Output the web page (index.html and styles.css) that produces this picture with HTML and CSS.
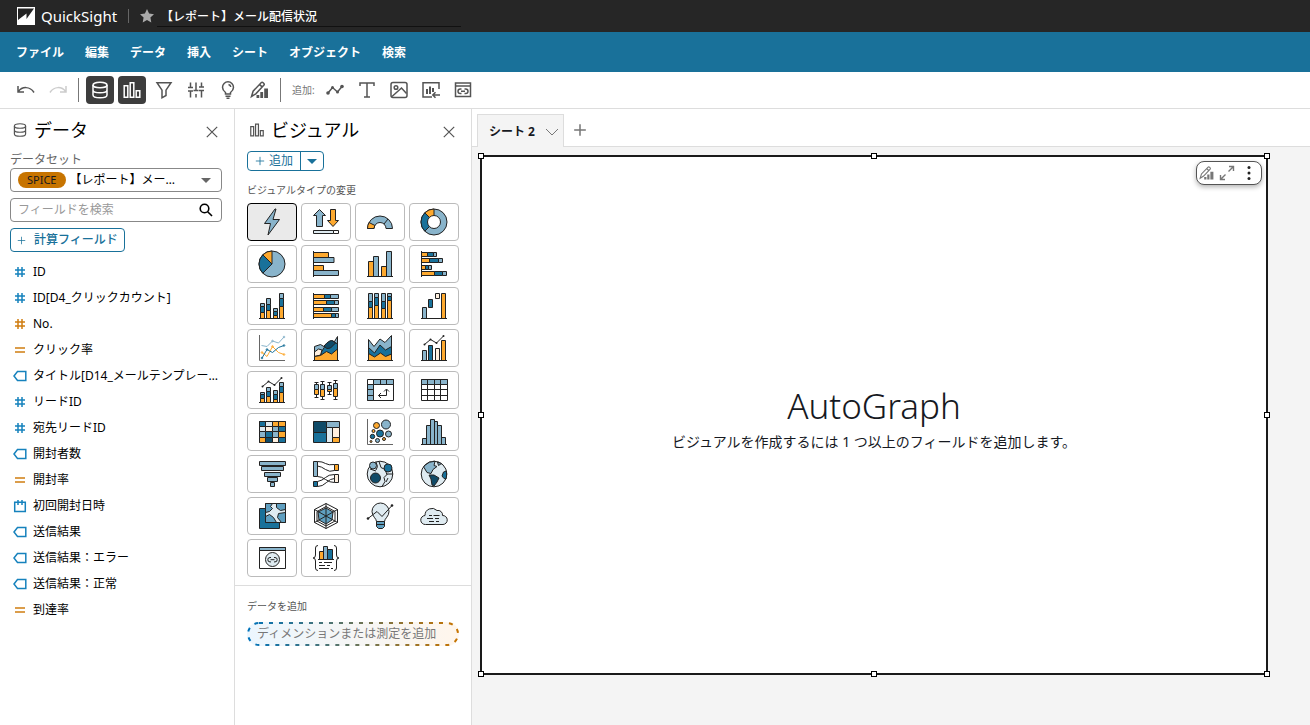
FILE: index.html
```
<!DOCTYPE html>
<html lang="ja">
<head>
    <meta charset="UTF-8">
    <meta name="viewport" content="width=device-width, initial-scale=1.0">
    <title>QuickSight</title>
    <link rel="stylesheet" href="styles.css">
</head>
<body>
    <!-- Shared icons -->
    <svg class="sprite" aria-hidden="true">
        <symbol id="i-db" viewBox="0 0 20 20"><ellipse cx="10" cy="5" rx="7" ry="2.8"/><path d="M3 5v10c0 1.6 3 2.8 7 2.8s7-1.2 7-2.8V5M3 10c0 1.6 3 2.800 7 2.800s7-1.200 7-2.800"/></symbol>
        <symbol id="i-bars" viewBox="0 0 20 20"><path d="M2.2 5.7h3.6v11.6H2.2zM8.2 2.7h3.6v14.6H8.2zM14.2 10.7h3.6v6.6h-3.6z"/></symbol>
        <symbol id="i-close" viewBox="0 0 12 12"><path d="M.8.8l10.4 10.4M11.2.8L.8 11.2"/></symbol>
        <symbol id="i-plus" viewBox="0 0 12 12"><path d="M6 1v10M1 6h10"/></symbol>
        <symbol id="i-pen" viewBox="0 0 20 20"><path d="M1.5 16.5l1.6-5.3 8.3-8.6c1-1 3.6 1.4 2.6 2.5L5.8 13.8zM9.7 4.6l2.400 2.300"/><path class="solid" d="M6.500 15h2.800v3H6.500zM10.300 12h2.800v6h-2.800zM14.200 8.500H18V18h-3.800z"/></symbol>
        <symbol id="f-hash" viewBox="0 0 14 14"><path d="M5 2v10M9 2v10M2 5h10M2 9h10"/></symbol>
        <symbol id="f-calc" viewBox="0 0 14 14"><path d="M2 5h10M2 9h10"/></symbol>
        <symbol id="f-text" viewBox="0 0 14 14"><path d="M4.500 2.600h8.300v8.800H4.500L1 7z"/></symbol>
        <symbol id="f-date" viewBox="0 0 14 14"><path d="M1.700 3.200h10.600v9.300H1.700zM5 1v5M9 1v5"/></symbol>
    </svg>

    <header class="top-bar">
        <a class="brand" href="#">
            <svg class="logo" viewBox="0 0 18 18"><path fill="#fff" d="M0 0h18v18H0z"/><path fill="#232323" d="M1 1.500h16L9.500 12V6.500L1 13z"/></svg>
            <span>QuickSight</span>
        </a>
        <span class="top-divider"></span>
        <button class="star" aria-label="お気に入り">
            <svg viewBox="0 0 14 14"><path fill="#aaa" d="M7 0l2.1 4.6 4.9.6-3.6 3.4.9 4.9L7 11.1l-4.3 2.4.9-4.9L0 5.2l4.9-.6z"/></svg>
        </button>
        <input class="analysis-name" type="text" value="【レポート】メール配信状況" aria-label="分析名">
    </header>

    <nav class="menu-bar">
        <button>ファイル</button>
        <button>編集</button>
        <button>データ</button>
        <button>挿入</button>
        <button>シート</button>
        <button>オブジェクト</button>
        <button>検索</button>
    </nav>

    <div class="toolbar">
        <button aria-label="元に戻す"><svg viewBox="0 0 20 20"><path d="M2 6v6h6M2.4 11.6C6 6.300 14 6 18 12.500"/></svg></button>
        <button aria-label="やり直す" disabled><svg viewBox="0 0 20 20"><path d="M18 6v6h-6M17.600 11.600C14 6.300 6 6 2 12.500"/></svg></button>
        <span class="divider"></span>
        <button class="active" aria-label="データ"><svg><use href="#i-db"/></svg></button>
        <button class="active" aria-label="ビジュアル"><svg><use href="#i-bars"/></svg></button>
        <button aria-label="フィルター"><svg viewBox="0 0 20 20"><path d="M3 2.700h14l-5 7.500v5.300l-4 2.300v-7.600z"/></svg></button>
        <button aria-label="パラメータ"><svg viewBox="0 0 20 20"><path d="M4.500 2.500v5M4.500 11v6.500M10 2.500v8M10 14v3.500M15.500 2.500v4M15.500 10v7.500M2 11h5M7.500 10.500h5M13 7h5M2 7.500h5M13 10.500h5"/></svg></button>
        <button aria-label="インサイト"><svg viewBox="0 0 20 20"><path d="M7.500 14v-1.500C5.500 11 4.500 9.500 4.500 7.300a5.500 5.500 0 0 1 11 0c0 2.200-1 3.700-3 5.200V14zM7.500 16.300h5M8.500 18.300h3M10.500 4.500q2 .5 2.300 2.500"/></svg></button>
        <button aria-label="書式設定"><svg><use href="#i-pen"/></svg></button>
        <span class="divider"></span>
        <span class="toolbar-label">追加:</span>
        <button aria-label="ビジュアルを追加"><svg viewBox="0 0 20 20"><path d="M3 13l4.500-5.500 5 4.500L17 6.500"/><circle class="solid" cx="3" cy="13" r="1.800"/><circle class="solid" cx="7.500" cy="7.500" r="1.500"/><circle class="solid" cx="12.500" cy="12" r="1.500"/><circle class="solid" cx="17" cy="6.500" r="1.800"/></svg></button>
        <button aria-label="テキストを追加"><svg viewBox="0 0 20 20"><path d="M3 6V3h14v3M10 3v14M7 17h6"/></svg></button>
        <button aria-label="画像を追加"><svg viewBox="0 0 20 20"><rect x="2" y="2.500" width="16" height="15" rx="2"/><circle cx="7" cy="7.500" r="1.800"/><path d="M3 16.500l9.500-8.500 5 5.500"/></svg></button>
        <button aria-label="保存済みビジュアルを追加"><svg viewBox="0 0 20 20"><path d="M11 17H2V2.700h16V9M19 15h-7M14.500 12.300L11.800 15l2.700 2.700"/><path class="solid" d="M5 9h2v5H5zM8 6.500h2V14H8zM11 8h2v4h-2z"/></svg></button>
        <button aria-label="ウェブコンテンツを追加"><svg viewBox="0 0 20 20"><path d="M2.500 3h15v13.500h-15zM2.500 6h15M8 11.300h4M8.500 9h-1.200a2.300 2.300 0 0 0 0 4.600h1.200M11.500 9h1.200a2.300 2.300 0 0 1 0 4.600h-1.200"/></svg></button>
    </div>

    <main class="editor">
        <section class="panel data-panel">
            <div class="panel-head">
                <svg><use href="#i-db"/></svg>
                <h2>データ</h2>
                <button class="close" aria-label="閉じる"><svg><use href="#i-close"/></svg></button>
            </div>
            <label class="dataset-label" for="dataset">データセット</label>
            <div class="box">
                <span class="spice">SPICE</span>
                <select id="dataset"><option>【レポート】メー…</option></select>
                <svg class="caret" viewBox="0 0 10 5"><path d="M0 0h10L5 5z"/></svg>
            </div>
            <div class="box">
                <input type="search" placeholder="フィールドを検索" aria-label="フィールドを検索">
                <svg class="lens" viewBox="0 0 14 14"><circle cx="5.500" cy="5.500" r="4.300"/><path d="M8.700 8.700l4.300 4.300"/></svg>
            </div>
            <button class="outline-btn calc-btn"><svg><use href="#i-plus"/></svg>計算フィールド</button>
            <ul class="fields">
                <li><svg class="dim"><use href="#f-hash"/></svg><span>ID</span></li>
                <li><svg class="dim"><use href="#f-hash"/></svg><span>ID[D4_クリックカウント]</span></li>
                <li><svg class="measure"><use href="#f-hash"/></svg><span>No.</span></li>
                <li><svg class="measure"><use href="#f-calc"/></svg><span>クリック率</span></li>
                <li><svg class="dim"><use href="#f-text"/></svg><span>タイトル[D14_メールテンプレー…</span></li>
                <li><svg class="dim"><use href="#f-hash"/></svg><span>リードID</span></li>
                <li><svg class="dim"><use href="#f-hash"/></svg><span>宛先リードID</span></li>
                <li><svg class="dim"><use href="#f-text"/></svg><span>開封者数</span></li>
                <li><svg class="measure"><use href="#f-calc"/></svg><span>開封率</span></li>
                <li><svg class="dim"><use href="#f-date"/></svg><span>初回開封日時</span></li>
                <li><svg class="dim"><use href="#f-text"/></svg><span>送信結果</span></li>
                <li><svg class="dim"><use href="#f-text"/></svg><span>送信結果：エラー</span></li>
                <li><svg class="dim"><use href="#f-text"/></svg><span>送信結果：正常</span></li>
                <li><svg class="measure"><use href="#f-calc"/></svg><span>到達率</span></li>
            </ul>
        </section>

        <section class="panel visual-panel">
            <div class="panel-head">
                <svg><use href="#i-bars"/></svg>
                <h2>ビジュアル</h2>
                <button class="close" aria-label="閉じる"><svg><use href="#i-close"/></svg></button>
            </div>
            <div class="split-btn">
                <button><svg><use href="#i-plus"/></svg>追加</button>
                <button aria-label="追加オプション"><svg class="caret" viewBox="0 0 10 5"><path d="M0 0h10L5 5z"/></svg></button>
            </div>
            <h3>ビジュアルタイプの変更</h3>
            <div class="types">
                <button class="selected" aria-label="AutoGraph"><svg viewBox="0 0 28 28"><path class="lb" d="M17 1L6.500 15.500h6L10 27l11.500-15.500h-6.500L18 1z"/></svg></button>
                <button aria-label="KPI"><svg viewBox="0 0 28 28"><path class="lb" d="M7.500 1.500l6 6h-3v11h-6v-11h-3z"/><path class="or" d="M18.500 1.500h5v11h3l-5.500 6-5.500-6h3z"/><path class="pl" d="M1.500 22.500h20v3h-20z"/><path class="wh" d="M21.500 22.500h5v3h-5z"/></svg></button>
                <button aria-label="ゲージ"><svg viewBox="0 0 28 28"><path class="lb" d="M1.500 20.500a12.500 12.500 0 0 1 25 0h-6.500a6 6 0 0 0-12 0z"/><path class="or" d="M1.500 20.500q0-3 1.500-6l6 3q-1 1.500-1 3z"/><path class="no" d="M18 16l4-5"/></svg></button>
                <button aria-label="ドーナツ"><svg viewBox="0 0 28 28"><circle class="lb" cx="14" cy="14" r="13"/><path class="db" d="M4.800 23.200a13 13 0 0 1 0-18.400L14 14z"/><path class="or" d="M4.800 4.800A13 13 0 0 1 14 1v13z"/><circle class="wh" cx="14" cy="14" r="6.500"/></svg></button>

                <button aria-label="円"><svg viewBox="0 0 28 28"><circle class="lb" cx="14" cy="14" r="13"/><path class="db" d="M4.800 23.200a13 13 0 0 1 0-18.400L14 14z"/><path class="or" d="M4.800 4.800A13 13 0 0 1 14 1v13z"/></svg></button>
                <button aria-label="横棒"><svg viewBox="0 0 28 28"><path class="or" d="M1.500 2.500h15v5h-15zM1.500 15.500h10v5h-10z"/><path class="lb" d="M1.500 7.500h20.500v5H1.500zM1.500 20.500h25v5h-25z"/><path class="no" d="M1.500 1v26"/></svg></button>
                <button aria-label="縦棒"><svg viewBox="0 0 28 28"><path class="or" d="M2.500 11.500h5v15h-5zM15.500 16.500h5v10h-5z"/><path class="lb" d="M7.500 6.500h5v20h-5zM20.500 1.500h5v25h-5z"/><path class="no" d="M1 26.500h26"/></svg></button>
                <button aria-label="積み上げ横棒"><svg viewBox="0 0 28 28"><path class="or" d="M1.500 2.500h6v4h-6zM1.500 8.500h8v4h-8zM1.500 15.500h4v4h-4zM1.500 21.500h13v4h-13z"/><path class="db" d="M7.500 2.500h6v4h-6zM9.500 8.500h9v4h-9zM5.500 15.500h3v4h-3zM14.500 21.500h8v4h-8z"/><path class="lb" d="M13.500 2.500h3v4h-3zM18.500 8.500h4v4h-4zM8.500 15.500h3v4h-3zM22.500 21.500h4v4h-4z"/><path class="no" d="M1.500 1v26"/></svg></button>

                <button aria-label="積み上げ縦棒"><svg viewBox="0 0 28 28"><path class="or" d="M2.500 20.500h4v6h-4zM8.500 18.500h4v8h-4zM15.500 23.500h4v3h-4zM21.500 14.500h4v12h-4z"/><path class="db" d="M2.500 14.500h4v6h-4zM8.500 12.500h4v6h-4zM15.500 19.500h4v4h-4zM21.500 6.500h4v8h-4z"/><path class="lb" d="M2.500 11.500h4v3h-4zM8.500 6.500h4v6h-4zM15.500 16.500h4v3h-4zM21.500 1.500h4v5h-4z"/><path class="no" d="M1 26.500h26"/></svg></button>
                <button aria-label="100%積み上げ横棒"><svg viewBox="0 0 28 28"><path class="or" d="M1.500 2.500h11v4h-11zM1.500 8.500h13v4h-13zM1.500 15.500h10v4h-10zM1.500 21.500h18v4h-18z"/><path class="db" d="M12.500 2.500h6v4h-6zM14.500 8.500h8v4h-8zM11.500 15.500h8v4h-8zM19.500 21.500h4v4h-4z"/><path class="lb" d="M18.500 2.500h8v4h-8zM22.500 8.500h4v4h-4zM19.500 15.500h7v4h-7zM23.500 21.500h3v4h-3z"/><path class="no" d="M1.500 1v26"/></svg></button>
                <button aria-label="100%積み上げ縦棒"><svg viewBox="0 0 28 28"><path class="or" d="M2.500 15.500h4v11h-4zM8.500 13.500h4v13h-4zM15.500 16.500h4v10h-4zM21.500 8.500h4v18h-4z"/><path class="db" d="M2.500 9.500h4v6h-4zM8.500 5.500h4v8h-4zM15.500 9.500h4v7h-4zM21.500 4.500h4v4h-4z"/><path class="lb" d="M2.500 1.500h4v8h-4zM8.500 1.500h4v4h-4zM15.500 1.500h4v8h-4zM21.500 1.500h4v3h-4z"/><path class="no" d="M1 26.500h26"/></svg></button>
                <button aria-label="ウォーターフォール"><svg viewBox="0 0 28 28"><path class="lb" d="M2.500 15.500h4v11h-4z"/><path class="db" d="M8.500 7.500h4v8h-4z"/><path class="cr" d="M15.500 1.500h4v5h-4z"/><path class="or" d="M21.500 1.500h4v25h-4z"/><path class="no" d="M1 26.500h26"/></svg></button>

                <button aria-label="折れ線"><svg viewBox="0 0 28 28"><path class="no gray" d="M1.500 1v25.500H27"/><path class="no s-lb" d="M3.500 11.500l5.500 1 5.500-5.500 6 2L26 3"/><path class="no s-or" d="M4 18.500l5 4 5.500-10 6 6 5.500 2"/><path class="no s-db" d="M4 24l5-8.500 5.500 3 6-5 5.500-2"/><g class="s-lb"><circle cx="26" cy="3" r=".8"/><circle cx="14.500" cy="7" r=".8"/></g><g class="s-or"><circle cx="4" cy="18.500" r=".8"/><circle cx="14.500" cy="12.500" r=".8"/><circle cx="26" cy="20.500" r=".8"/></g><g class="s-db"><circle cx="4" cy="24" r=".8"/><circle cx="9" cy="15.500" r=".8"/><circle cx="26" cy="11.500" r=".8"/></g></svg></button>
                <button aria-label="エリア"><svg viewBox="0 0 28 28"><path class="lb" d="M2.500 12.500l6-2 5 3 6-6h3l3-5v24h-23z"/><path class="db" d="M9 18.500l4.500-7q6-7 9-3.500l3 2v14H9z"/><path class="nv" d="M12 12q6-7 9-5l2.500 2-5 5q-4 2-6.500-2z"/><path class="cr" d="M2.500 18l4-3 3.500 1-1.500 5-6 1.500z"/><path class="or" d="M2.500 22.500l6-1 6-4 5 2.500 6-5v11.500h-23z"/><path class="no" d="M1 26.500h26"/></svg></button>
                <button aria-label="積み上げエリア"><svg viewBox="0 0 28 28"><path class="lb" d="M2.500 5.500l5.500 7 6-7.500 5 3.500 6.500-7v20h-23z"/><path class="db" d="M2.500 13.500l6 5.500 5.500-8 5.500 5 6-3.500v11h-23z"/><path class="or" d="M2.500 19.500l6 3.500 6-4 5 3.500 6-2.500v6.500h-23z"/><path class="no" d="M1 26.500h26"/></svg></button>
                <button aria-label="コンボ"><svg viewBox="0 0 28 28"><path class="lb" d="M2.500 16.500h4v10h-4z"/><path class="db" d="M8.500 11.500h4v15h-4z"/><path class="cr" d="M15.500 14.500h4v12h-4z"/><path class="or" d="M21.500 6.500h4v20h-4z"/><path class="no" d="M1 26.500h26M4.500 10.500l6-5 6 3.500 7-7"/><g class="bk"><circle cx="4.500" cy="10.500" r="1"/><circle cx="10.500" cy="5.500" r="1"/><circle cx="16.500" cy="9" r="1"/><circle cx="23.500" cy="2" r="1"/></g></svg></button>

                <button aria-label="積み上げコンボ"><svg viewBox="0 0 28 28"><path class="or" d="M2.500 22.500h4v4h-4zM8.500 20.500h4v6h-4zM15.500 23.500h4v3h-4zM21.500 16.500h4v10h-4z"/><path class="db" d="M2.500 18.500h4v4h-4zM8.500 15.500h4v5h-4zM15.500 18.500h4v5h-4zM21.500 10.500h4v6h-4z"/><path class="lb" d="M2.500 16.500h4v2h-4zM8.500 11.500h4v4h-4zM15.500 14.500h4v4h-4zM21.500 6.500h4v4h-4z"/><path class="no" d="M1 26.500h26M4.500 10.500l6-5 6 3.500 7-7"/><g class="bk"><circle cx="4.500" cy="10.500" r="1"/><circle cx="10.500" cy="5.500" r="1"/><circle cx="16.500" cy="9" r="1"/><circle cx="23.500" cy="2" r="1"/></g></svg></button>
                <button aria-label="箱ひげ図"><svg viewBox="0 0 28 28"><path class="no" d="M4.500 6v16M2.500 6.500h4M2.500 21.500h4M10.500 5v19M8.500 5.500h4M8.500 23.500h4M17.500 6v13M15.500 6.500h4M15.500 18.500h4M23.500 4v20M21.500 4.500h4M21.500 23.500h4"/><path class="lb" d="M2.500 8.500h4v5h-4zM8.500 8.500h4v5h-4zM15.500 9.500h4v4h-4zM21.500 7.500h4v5h-4z"/><path class="or" d="M2.500 13.500h4v5h-4zM8.500 13.500h4v7h-4zM15.500 13.500h4v2h-4zM21.500 12.500h4v8h-4z"/></svg></button>
                <button aria-label="ピボットテーブル"><svg viewBox="0 0 28 28"><path class="wh" d="M1.500 3.500h26v21h-26z"/><path class="lb" d="M7.500 3.500h20v5h-20zM1.500 8.500h6v16h-6z"/><path class="no" d="M14.500 3.500v5M20.500 3.500v5M1.500 13.500h6M1.500 19.500h6M12.500 19.500h8v-6M15 17l-2.500 2.500L15 22M18 15.500l2.500-2.500 2.500 2.500"/></svg></button>
                <button aria-label="テーブル"><svg viewBox="0 0 28 28"><path class="wh" d="M1.500 3.500h26v21h-26z"/><path class="lb" d="M1.500 3.500h26v5h-26z"/><path class="no" d="M7.500 3.500v21M14.500 3.500v21M20.500 3.500v21M1.500 13.500h26M1.500 19.500h26"/></svg></button>

                <button aria-label="ヒートマップ"><svg viewBox="0 0 28 28"><path class="pl" d="M1.500 3.500h26v21h-26z"/><path class="db" d="M1.500 3.500h6v5h-6zM7.500 13.500h7v6h-7zM20.500 8.500h7v5h-7zM20.500 19.500h7v5h-7z"/><path class="or" d="M14.500 3.500h6v5h-6zM20.500 3.500h7v5h-7zM1.500 19.500h6v5h-6zM20.500 13.500h7v6h-7z"/><path class="lb" d="M14.500 8.500h6v5h-6zM14.500 13.500h6v6h-6zM1.500 13.500h6v6h-6z"/><path class="nv" d="M7.500 19.500h7v5h-7z"/><path class="cr" d="M7.500 8.500h7v5h-7zM14.500 19.500h6v5h-6z"/><path class="no" d="M7.500 3.500v5"/></svg></button>
                <button aria-label="ツリーマップ"><svg viewBox="0 0 28 28"><path class="nv" d="M1.500 3.500h13v11h-13z"/><path class="db" d="M1.500 14.500h13v10h-13z"/><path class="lb" d="M14.500 3.500h13v6h-13z"/><path class="pl" d="M14.500 9.500h6v15h-6z"/><path class="cr" d="M20.500 9.500h7v10h-7z"/><path class="or" d="M20.500 19.500h7v5h-7z"/></svg></button>
                <button aria-label="散布図"><svg viewBox="0 0 28 28"><path class="no gray" d="M1.500 1v25.500H27"/><circle class="or" cx="10.500" cy="7.500" r="3"/><circle class="lb" cx="20" cy="6.500" r="4.500"/><circle class="db" cx="14" cy="15.500" r="3.500"/><circle class="lb" cx="22.500" cy="16" r="3"/><circle class="or" cx="7.500" cy="13" r="1.500"/><circle class="db" cx="6.500" cy="18.500" r="2.200"/><circle class="lb" cx="11.500" cy="22.500" r="2"/><circle class="or" cx="18" cy="21" r="1.500"/><circle class="or" cx="5" cy="23.500" r="1"/></svg></button>
                <button aria-label="ヒストグラム"><svg viewBox="0 0 28 28"><path class="lb" d="M2.500 20.500h4v6h-4zM6.500 7.500h4v19h-4zM10.500 1.500h4v25h-4zM14.500 3.500h3v23h-3zM17.500 7.500h4v19h-4zM21.500 19.500h4v7h-4z"/><path class="no" d="M1 26.500h26"/></svg></button>

                <button aria-label="ファネル"><svg viewBox="0 0 28 28"><path class="lb" d="M1.500 1.500h26v4h-26zM3.500 6.500h22v4h-22zM6.500 12.500h16v4h-16zM9.500 17.500h10v4h-10zM12.500 22.500h4v4h-4z"/></svg></button>
                <button aria-label="サンキー"><svg viewBox="0 0 28 28"><path class="no" d="M5.500 1.500q5 0 8 2t9 1M5.500 6q4 .5 8 3.500t9 1M5.500 16.500q4 0 8 3t9 3M5.500 21.500q5-1 8-4t9-3M5.500 26.500q5 0 9-4t8-4"/><path class="lb" d="M1.500 1.500h4v15h-4z"/><path class="db" d="M1.500 21.500h4v5h-4z"/><path class="or" d="M22.500 4.500h4v6h-4z"/><path class="cr" d="M22.500 14.500h4v8h-4z"/></svg></button>
                <button aria-label="ポイントマップ"><svg viewBox="0 0 28 28"><circle class="pl" cx="14" cy="14" r="12.800"/><path class="no" d="M10 2q3 5 0 8M13 1.500l2 6 4 2 2 5-3 3 1 4-3 5M4 9l6 2M20 14h7M22 18l-2 4"/><circle class="lb" cx="7" cy="5.500" r="3.500"/><circle class="db" cx="22" cy="8" r="4"/><circle class="nv" cx="9.500" cy="18" r="5"/></svg></button>
                <button aria-label="塗り分けマップ"><svg viewBox="0 0 28 28"><circle class="pl" cx="14" cy="14" r="12.800"/><path class="lb" d="M4 6q5-5 11-4.800l-1 4.300 3 1-4 3-2 4-4-1-3-5z"/><path class="nv" d="M9 15l5 0 5 3-2 4-3 4-2-1-1-6z"/><path class="db" d="M26.500 11l-3 1-1.500 4 2 2.500 2 .5q1-4 .500-8z"/><path class="lb" d="M17.500 2l4 1.500-3 2z"/></svg></button>

                <button aria-label="レイヤーマップ"><svg viewBox="0 0 28 28"><path class="db" d="M1.500 6.500h20v20h-20z"/><path class="pl" d="M7.500 1.500h20v19h-20z"/><path class="mb" d="M7.500 1.500h7l-2 3 2 2-3 3-4 1zM18.500 1.500h9v6l-5 1-4-3zM20.500 11.500l7-1v10h-4l-4-5zM7.500 14.500l4-2 4 3 3 5h-11z"/></svg></button>
                <button aria-label="レーダー"><svg viewBox="0 0 28 28"><path class="wh" d="M14 1.500l11.500 6v13L14 26.500 2.500 20.500v-13z"/><path class="no" d="M14 4.500l9 5v9.500l-9 5-9-5V9.500z"/><path class="mb" d="M14 6l7 4-1 8-6 4-7-4-1-8z"/><path class="no" d="M14 1.500v25M2.500 7.500l23 13M25.500 7.500l-23 13"/></svg></button>
                <button aria-label="インサイト"><svg viewBox="0 0 28 28"><path class="pl" d="M10.500 19.500c0-3-4.500-5-4.500-10a8.500 8.500 0 0 1 17 0c0 5-4.500 7-4.500 10z"/><path class="mb" d="M10.500 19.500h8v5l-2 2h-4l-2-2zM10.500 22.500h8"/><path class="no" d="M2 16.500l9-7 5 5 10-11"/><g class="bk"><circle cx="2" cy="16.500" r="1.300"/><circle cx="26" cy="3.500" r="1.300"/></g></svg></button>
                <button aria-label="ワードクラウド"><svg viewBox="0 0 28 28"><path class="pl" d="M5.500 22.500a4.500 4.500 0 0 1-.5-9 7 7 0 0 1 12-5 4.500 4.500 0 0 1 5.500 5 4.500 4.500 0 0 1 .5 9z"/><path class="no" d="M9 13.500h3M13.500 13.500h6M7 16.500h6M15 16.500h4M9 19.500h5M16 19.500h3"/></svg></button>

                <button aria-label="カスタムコンテンツ"><svg viewBox="0 0 28 28"><path class="wh" d="M1.500 3.500h26v21h-26z"/><path class="lb" d="M1.500 3.500h26v3h-26z"/><circle class="pl" cx="14.500" cy="15.500" r="7"/><path class="no" d="M13 13.500h-1a2.200 2.200 0 0 0 0 4.400h1M16 13.500h1a2.200 2.200 0 0 1 0 4.400h-1M12.500 15.700h4"/></svg></button>
                <button aria-label="Highcharts"><svg viewBox="0 0 28 28"><path class="no" d="M6 1.500q-2.500 0-2.500 2.500v7q0 3-2.500 3 2.500 0 2.500 3v7q0 2.500 2.500 2.500M22 1.500q2.500 0 2.500 2.500v7q0 3 2.500 3-2.500 0-2.500 3v7q0 2.500-2.500 2.500M7 18.500h3M12 18.500h8M7 21.500h6M15 21.500h3M7 24.500h10M19 24.500h2"/><path class="or" d="M7.500 7.500h4v8h-4z"/><path class="lb" d="M11.500 2.500h4v13h-4z"/><path class="db" d="M15.500 5.500h5v10h-5z"/><path class="no" d="M6 15.500h16"/></svg></button>
            </div>
            <div class="field-well">
                <h3>データを追加</h3>
                <button class="drop-zone">
                    <svg aria-hidden="true">
                        <linearGradient id="edge"><stop offset="0" stop-color="#0073bb"/><stop offset="1" stop-color="#c77400"/></linearGradient>
                        <rect rx="11" stroke="url(#edge)"/>
                    </svg>
                    ディメンションまたは測定を追加
                </button>
            </div>
        </section>

        <section class="workspace">
            <div class="tabs">
                <button class="tab">シート 2 <svg viewBox="0 0 14 8"><path d="M1 1l6 6 6-6"/></svg></button>
                <button class="add-tab" aria-label="シートを追加"><svg><use href="#i-plus"/></svg></button>
            </div>
            <div class="sheet">
                <div class="visual">
                    <div class="visual-menu">
                        <button aria-label="書式設定"><svg><use href="#i-pen"/></svg></button>
                        <button aria-label="最大化"><svg viewBox="0 0 16 16"><path d="M9.500 6.500l5-5M10 1.500h4.500V6M6.500 9.500l-5 5M1.500 10v4.500H6"/></svg></button>
                        <button class="more" aria-label="メニュー"><svg viewBox="0 0 16 16"><circle cx="8" cy="2.500" r="1.500"/><circle cx="8" cy="8" r="1.500"/><circle cx="8" cy="13.500" r="1.500"/></svg></button>
                    </div>
                    <h1>AutoGraph</h1>
                    <p>ビジュアルを作成するには 1 つ以上のフィールドを追加します。</p>
                    <span class="handle top left"></span>
                    <span class="handle top center"></span>
                    <span class="handle top right"></span>
                    <span class="handle middle left"></span>
                    <span class="handle middle right"></span>
                    <span class="handle bottom left"></span>
                    <span class="handle bottom center"></span>
                    <span class="handle bottom right"></span>
                </div>
            </div>
        </section>
    </main>
</body>
</html>
```
FILE: styles.css
```
* {
    box-sizing: border-box;
}

body {
    margin: 0;
    min-height: 100vh;
    display: flex;
    flex-direction: column;
    background-color: #fff;
    color: #000;
    font-family: "Noto Sans", "Noto Sans CJK JP", sans-serif;
    font-size: 12px;
    line-height: 18px;
}

button, input, select {
    font: inherit;
    color: inherit;
    margin: 0;
    padding: 0;
    border: none;
    background: none;
}

button {
    cursor: pointer;
}

h1, h2, h3, p, ul {
    margin: 0;
    padding: 0;
    font-weight: 400;
}

svg {
    display: block;
    flex: none;
    fill: none;
    stroke: currentColor;
}

.sprite {
    display: none;
}

.solid {
    fill: currentColor;
    stroke: none;
}

/* Top bar */
.top-bar {
    display: flex;
    align-items: center;
    height: 32px;
    padding-left: 17px;
    background-color: #262626;
    color: #fff;
}

.brand {
    display: flex;
    align-items: center;
    gap: 6px;
    color: #fff;
    font-size: 15px;
    text-decoration: none;
}

.logo {
    width: 18px;
    height: 18px;
    stroke: none;
}

.top-divider {
    width: 1px;
    height: 14px;
    margin: 0 11px;
    background-color: #666;
}

.star svg {
    width: 14px;
    height: 14px;
    stroke: none;
}

.analysis-name {
    width: 304px;
    height: 22px;
    margin-left: 3px;
    padding-left: 4px;
    border-bottom: 1px solid #111;
    font-weight: 500;
}

/* Menu bar */
.menu-bar {
    display: flex;
    align-items: center;
    gap: 21px;
    height: 40px;
    padding-top: 2px;
    padding-left: 16px;
    background-color: #19719a;
    color: #fff;
}

.menu-bar button {
    font-weight: 700;
}

/* Toolbar */
.toolbar {
    display: flex;
    align-items: center;
    gap: 4px;
    height: 37px;
    padding-left: 12px;
    border-bottom: 1px solid #ddd;
    color: #545454;
}

.toolbar button {
    display: flex;
    align-items: center;
    justify-content: center;
    width: 28px;
    height: 28px;
    border-radius: 4px;
}

.toolbar button:disabled {
    color: #ccc;
}

.toolbar .active {
    background-color: #3d3d3d;
    color: #fff;
}

.toolbar svg {
    width: 20px;
    height: 20px;
    stroke-width: 1.5;
}

.divider {
    width: 1px;
    height: 24px;
    margin: 0 3px 0 2px;
    background-color: #777;
}

.toolbar-label {
    padding: 0 2px 0 4px;
    color: #777;
    font-size: 10px;
}

/* Panels */
.editor {
    display: flex;
    flex: 1;
}

.panel {
    flex: none;
    border-right: 1px solid #ddd;
}

.panel-head {
    display: flex;
    align-items: center;
    gap: 6px;
    height: 42px;
    color: #545454;
}

.panel-head svg {
    width: 16px;
    height: 16px;
    stroke-width: 1.5;
}

.panel-head h2 {
    color: #000;
    font-size: 18px;
    line-height: 26px;
}

.panel-head .close {
    margin-left: auto;
    padding: 6px 4px 3px;
}

.panel-head .close svg {
    width: 12px;
    height: 12px;
    stroke-width: 1.2;
}

/* Data panel */
.data-panel {
    width: 235px;
    padding: 0 12px 0 10px;
}

.data-panel .panel-head {
    padding-left: 2px;
}

.dataset-label {
    display: block;
    color: #666;
    line-height: 17px;
}

.box {
    display: flex;
    align-items: center;
    height: 24px;
    margin-bottom: 6px;
    padding: 0 8px 0 7px;
    border: 1px solid #888;
    border-radius: 4px;
}

.spice {
    padding: 0 9px;
    border-radius: 8px;
    background-color: #c77400;
    color: #16191f;
    font-size: 11px;
    line-height: 16px;
}

.box select {
    flex: 1;
    min-width: 0;
    padding-left: 4px;
    appearance: none;
}

.box input {
    flex: 1;
    min-width: 0;
}

.box input::placeholder {
    color: #999;
}

.caret {
    width: 10px;
    height: 5px;
    margin-right: 2px;
    fill: #666;
    stroke: none;
}

.lens {
    width: 14px;
    height: 14px;
    color: #000;
    stroke-width: 1.6;
}

.outline-btn {
    display: flex;
    align-items: center;
    gap: 8px;
    height: 24px;
    padding: 0 6px;
    border: 1px solid #19719a;
    border-radius: 4px;
    color: #19719a;
    font-weight: 500;
}

.outline-btn svg {
    width: 9px;
    height: 9px;
}

.fields {
    margin-top: 7px;
    list-style: none;
}

.fields li {
    display: flex;
    align-items: center;
    gap: 6px;
    height: 26px;
    padding-left: 3px;
    white-space: nowrap;
}

.fields svg {
    width: 14px;
    height: 14px;
    stroke-width: 1.5;
}

.dim {
    color: #1682bd;
}

.measure {
    color: #cf7d11;
}

/* Visual panel */
.visual-panel {
    width: 237px;
}

.visual-panel > * {
    margin-left: 12px;
    margin-right: 12px;
}

.visual-panel .panel-head {
    padding-left: 2px;
}

.split-btn {
    display: inline-flex;
    height: 20px;
    border: 1px solid #19719a;
    border-radius: 4px;
    color: #19719a;
    vertical-align: top;
}

.split-btn button {
    display: flex;
    align-items: center;
    gap: 4px;
    padding: 0 7px;
}

.split-btn button + button {
    padding: 0 6px;
    border-left: 1px solid #19719a;
}

.split-btn svg {
    width: 10px;
    height: 10px;
}

.split-btn .caret {
    height: 5px;
    margin: 0;
    fill: #19719a;
}

.visual-panel h3 {
    color: #555;
    font-size: 10px;
    line-height: 16px;
}

.visual-panel > h3 {
    margin-top: 11px;
    margin-bottom: 5px;
}

.types {
    display: grid;
    grid-template-columns: repeat(4, 1fr);
    gap: 4px;
}

.types button {
    display: flex;
    align-items: center;
    justify-content: center;
    height: 38px;
    border: 1px solid #bbb;
    border-radius: 4px;
    background-color: #fff;
    color: #222;
}

.types .selected {
    border-color: #000;
    background-color: #eaeaea;
}

.types svg {
    width: 28px;
    height: 28px;
}

/* Chart icon colours */
.lb { fill: #89b4cb; }
.mb { fill: #5f9fc0; }
.db { fill: #19719a; }
.nv { fill: #104b68; }
.or { fill: #fda92f; }
.cr { fill: #fff0df; }
.pl { fill: #dfebf1; }
.wh { fill: #fff; }
.bk { fill: #222; stroke: none; }
.no { fill: none; }
.gray { stroke: #666; }
.s-lb { stroke: #89b4cb; }
.s-db { stroke: #19719a; }
.s-or { stroke: #fda92f; }

.visual-panel .field-well {
    margin: 8px 0 0;
    padding: 12px;
    border-top: 1px solid #ddd;
}

.drop-zone {
    position: relative;
    display: block;
    width: 100%;
    height: 24px;
    margin-top: 8px;
    padding-left: 10px;
    border-radius: 12px;
    background: linear-gradient(to right, #ecf6fe, #fff6ec);
    color: #777;
    text-align: left;
}

.drop-zone svg {
    position: absolute;
    inset: 0;
    width: 100%;
    height: 100%;
}

.drop-zone rect {
    x: 1px;
    y: 1px;
    width: calc(100% - 2px);
    height: 22px;
    stroke-width: 2;
    stroke-dasharray: 4 6;
}

/* Workspace */
.workspace {
    flex: 1;
    min-width: 0;
    background-color: #f4f4f4;
}

.tabs {
    display: flex;
    align-items: flex-end;
    height: 38px;
    padding-left: 5px;
    border-bottom: 1px solid #ddd;
    background-color: #fff;
}

.tab {
    display: flex;
    align-items: center;
    gap: 10px;
    height: 33px;
    margin-bottom: -1px;
    padding: 2px 4px 0 11px;
    border: 1px solid #ddd;
    border-bottom: none;
    background-color: #f4f4f4;
    color: #16191f;
    font-weight: 700;
}

.tab svg {
    width: 14px;
    height: 8px;
    color: #777;
}

.add-tab {
    padding: 9px;
    color: #777;
}

.add-tab svg {
    width: 14px;
    height: 14px;
    stroke-width: 1.3;
}

.sheet {
    padding: 8px 42px 8px 8px;
}

.visual {
    position: relative;
    display: flex;
    flex-direction: column;
    align-items: center;
    justify-content: center;
    padding-top: 6px;
    aspect-ratio: 788 / 520;
    border: 2px solid #1a1a1a;
    background-color: #fff;
    color: #16191f;
}

.visual h1 {
    font-size: 35px;
    font-weight: 300;
    line-height: 48px;
}

.visual p {
    font-size: 14px;
    line-height: 24px;
}

.visual-menu {
    position: absolute;
    top: 4px;
    right: 4px;
    display: flex;
    align-items: center;
    gap: 4px;
    height: 24px;
    padding: 0 4px 0 2px;
    border: 1px solid #545454;
    border-radius: 8px;
    background-color: #fff;
    box-shadow: 0 2px 5px rgba(0, 0, 0, 0.3);
    color: #777;
}

.visual-menu svg {
    width: 16px;
    height: 16px;
    stroke-width: 1.4;
}

.visual-menu .more {
    margin-left: 2px;
    color: #222;
}

.more svg {
    fill: currentColor;
    stroke: none;
}

/* Resize handles */
.handle {
    position: absolute;
    width: 6px;
    height: 6px;
    border: 1px solid #000;
    background-color: #fff;
}

.top { top: -4px; }
.middle { top: calc(50% - 3px); }
.bottom { bottom: -4px; }
.left { left: -4px; }
.center { left: calc(50% - 3px); }
.right { right: -4px; }
```
